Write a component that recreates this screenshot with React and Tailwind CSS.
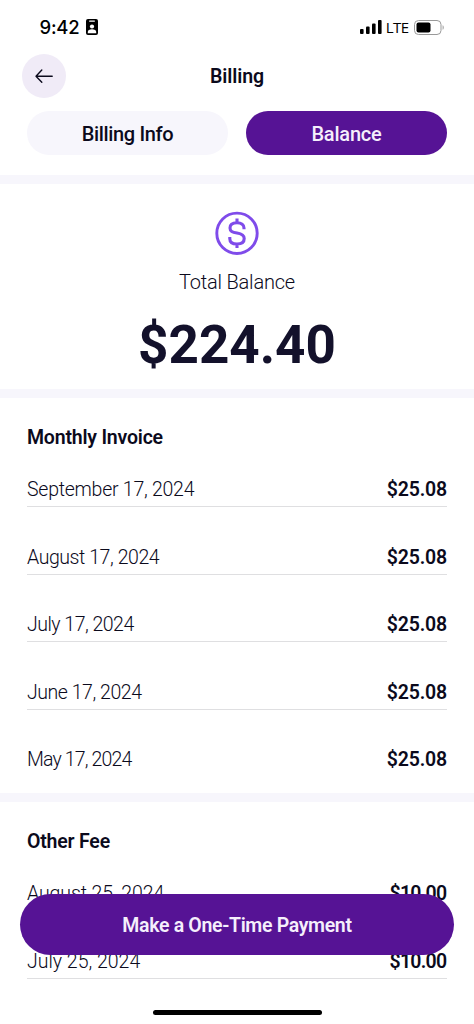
const invoices = [
  { date: 'September 17, 2024', amount: '$25.08', dateClass: 'tracking-[-0.25px]' },
  { date: 'August 17, 2024', amount: '$25.08', dateClass: 'tracking-[-0.43px]' },
  { date: 'July 17, 2024', amount: '$25.08', dateClass: 'tracking-[-0.5px]' },
  { date: 'June 17, 2024', amount: '$25.08', dateClass: 'tracking-[-0.45px]' },
  { date: 'May 17, 2024', amount: '$25.08', dateClass: 'tracking-[-0.85px]' },
]

const fees = [
  { date: 'August 25, 2024', amount: '$10.00', dateClass: 'tracking-[-0.1px]', amountClass: 'tracking-[-0.7px] pr-[0.5px]' },
  { date: 'July 25, 2024', amount: '$10.00', dateClass: 'tracking-normal', amountClass: 'tracking-[-0.7px] pr-[0.5px]' },
]

export default function App() {
  return (
    <div className="relative flex h-[1024px] w-[474px] flex-col overflow-hidden bg-white font-['Roboto',sans-serif] text-[#0b0a1c]">
      <StatusBar />

      <header className="grid h-11 shrink-0 grid-cols-[44px_1fr_44px] items-center px-[22px]">
        <button className="grid size-11 place-items-center rounded-full bg-[#f0ebf7]" aria-label="Back">
          <BackArrow />
        </button>
        <h1 className="pt-0.5 text-center text-[19.5px] font-semibold leading-6 tracking-[-0.1px]">Billing</h1>
      </header>

      <nav className="mt-[13px] flex h-11 shrink-0 gap-[18px] px-[27px] text-[20px] font-medium">
        <button className="flex-1 rounded-full bg-[#f7f6fc] pt-0.5 tracking-[-0.35px]">Billing Info</button>
        <button className="flex-1 rounded-full bg-[#561395] pt-0.5 tracking-[-0.2px] text-[#f5effc]">Balance</button>
      </nav>

      <Divider className="mt-5" />

      <section className="flex h-[205px] shrink-0 flex-col items-center pt-[27px]">
        <DollarIcon />
        <p className="mt-[15px] text-[20px] font-light leading-6 tracking-[-0.2px]">Total Balance</p>
        <p className="mt-[19px] text-[53px] font-bold leading-[64px] text-[#13112b]">$224.40</p>
      </section>

      <Divider />

      <Section title="Monthly Invoice" rows={invoices} className="h-[395px]" />
      <Divider />
      <Section title="Other Fee" rows={fees} className="h-[222px]" lastLine />

      <button className="absolute left-5 top-[894px] h-[61px] w-[434px] rounded-full bg-[#561395] pt-[3px] text-[19.5px] font-semibold tracking-[-0.33px] text-[#f5effc]">
        Make a One-Time Payment
      </button>
      <div className="absolute left-[153px] top-[1010px] h-[5px] w-[169px] rounded-full bg-black" />
    </div>
  )
}

function Divider({ className = '' }) {
  return <div className={`h-[9px] shrink-0 bg-[#f7f6fc] ${className}`} />
}

function Section({ title, rows, className, lastLine }) {
  return (
    <section className={`shrink-0 px-[27px] pt-7 ${className}`}>
      <h2 className="text-[19.5px] font-semibold leading-6 tracking-[-0.2px]">{title}</h2>
      <ul className="-mt-[10.5px]">
        {rows.map((row, i) => (
          <li
            key={row.date}
            className={`flex h-[67.5px] items-end justify-between border-b pb-1 text-[19.5px] leading-6 ${
              i < rows.length - 1 || lastLine ? 'border-[#dfdfe1]' : 'border-transparent'
            }`}
          >
            <span className={`font-light ${row.dateClass}`}>{row.date}</span>
            <span className={`font-semibold ${row.amountClass || 'tracking-[-0.15px]'}`}>{row.amount}</span>
          </li>
        ))}
      </ul>
    </section>
  )
}

function StatusBar() {
  return (
    <div className="flex h-[54px] shrink-0 items-center justify-between pl-[39.5px] pr-[29px] text-black">
      <div className="flex items-center gap-[6.5px]">
        <span className="font-['Inter',sans-serif] text-[18.5px] font-medium leading-6 tracking-[-0.2px]">9:42</span>
        {/* focus badge */}
        <svg width="12" height="16" viewBox="0 0 12 16">
          <rect width="12" height="16" rx="2" fill="#000" />
          <rect x="3" y="1.4" width="6" height="1.3" rx=".6" fill="#fff" />
          <circle cx="6" cy="7.5" r="2.1" fill="#fff" />
          <path d="M1.8 14.2v-1.1c0-1.8 1.6-2.8 4.2-2.8s4.2 1 4.2 2.8v1.1z" fill="#fff" />
        </svg>
      </div>
      <div className="flex items-center">
        <svg width="22" height="14" viewBox="0 0 22 14">
          <rect x="0" y="9" width="3.6" height="5" rx="1" />
          <rect x="6" y="6.5" width="3.6" height="7.5" rx="1" />
          <rect x="12" y="3.5" width="3.6" height="10.5" rx="1" />
          <rect x="18" y="0" width="3.6" height="14" rx="1" />
        </svg>
        <span className="ml-1 font-['Open_Sans',sans-serif] text-[15px] leading-5 tracking-[-0.6px]">LTE</span>
        <svg className="ml-[5.5px]" width="31" height="15" viewBox="0 0 31 15">
          <rect x=".5" y=".5" width="26.5" height="14" rx="4" fill="none" stroke="#999" />
          <rect x="2.5" y="2.5" width="14" height="10" rx="2" />
          <path d="M28.6 5.2c1.5.5 1.5 4.1 0 4.6z" fill="#999" />
        </svg>
      </div>
    </div>
  )
}

function BackArrow() {
  return (
    <svg width="20" height="16" viewBox="0 0 20 16" fill="none" stroke="#0b0a1c" strokeWidth="1.4" strokeLinecap="round" strokeLinejoin="round">
      <path d="M18.2 8.3H2M7.8 2.1 2 8.3l5.8 6" />
    </svg>
  )
}

function DollarIcon() {
  return (
    <svg className="shrink-0" width="44" height="44" viewBox="0 0 44 44" fill="none" stroke="#7f4bea" strokeWidth="2.9">
      <circle cx="22" cy="22.3" r="20.2" />
      <path
        strokeWidth="3.1"
        d="M29 18.2v-1.3c0-3.2-2.5-5.1-7-5.1s-7 2-7 5.2c0 3.3 2.2 4.2 7 5s7.2 2 7.2 5.5c0 3.5-2.6 5.5-7.2 5.5s-7.2-2-7.2-5.3v-1.6M22 7.6v4.2M22 33v4"
      />
    </svg>
  )
}
